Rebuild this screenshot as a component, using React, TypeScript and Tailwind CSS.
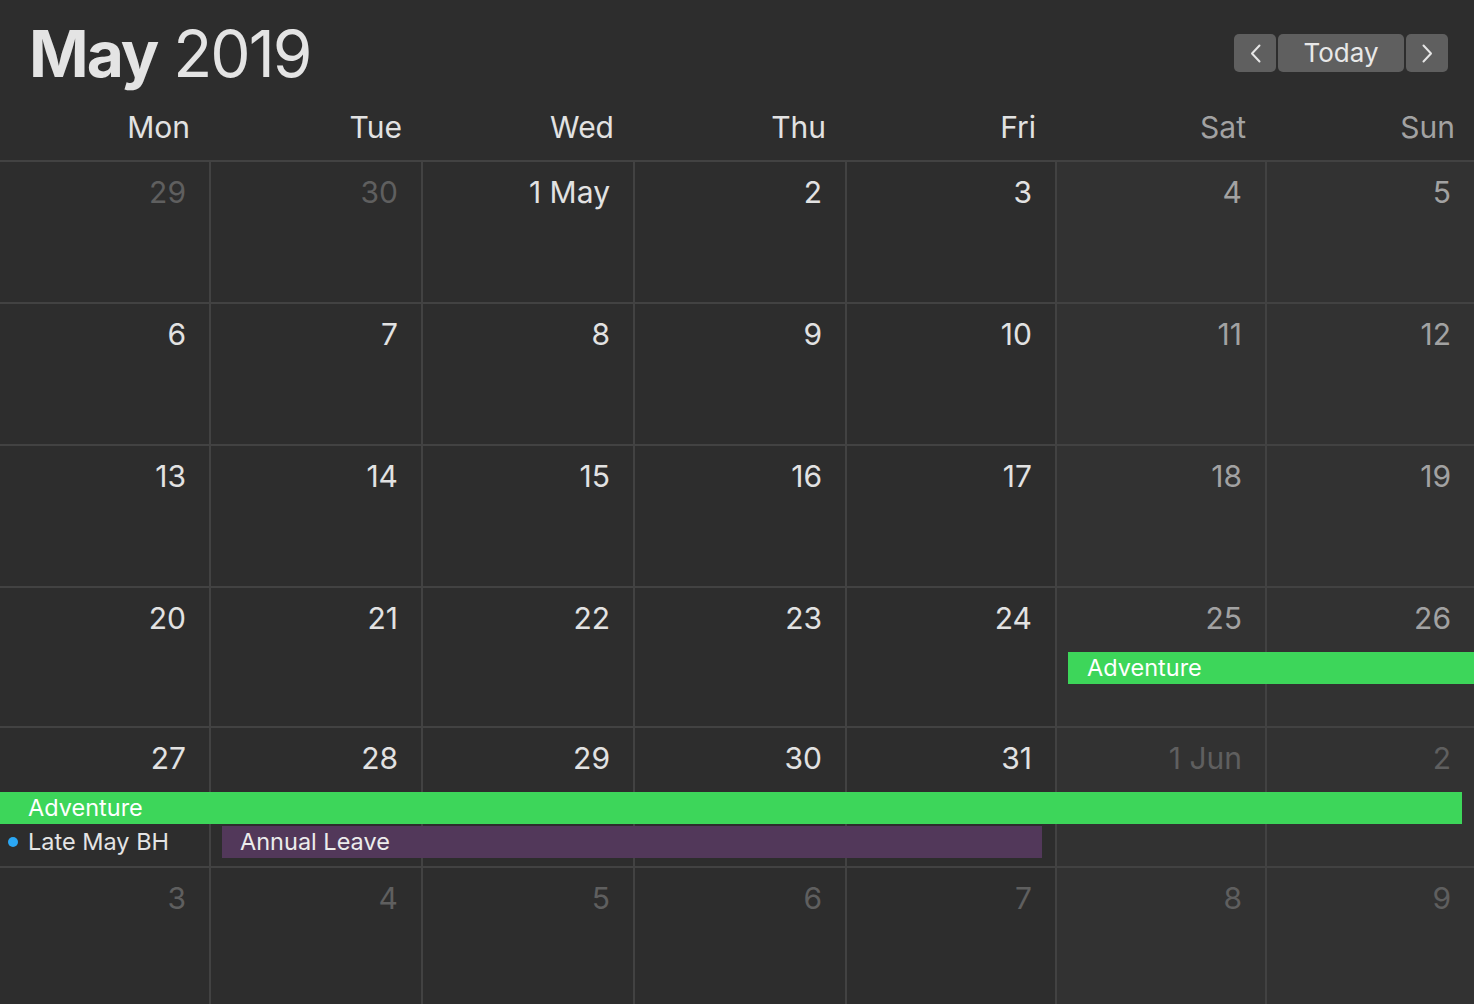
import React from 'react';

type Day = { label: string; tone: 'cur' | 'other' };

const colWidths = 'grid-cols-[209px_212px_212px_212px_210px_210px_209px]';
const dayNames = ['Mon', 'Tue', 'Wed', 'Thu', 'Fri', 'Sat', 'Sun'];

const weeks: { h: string; days: Day[] }[] = [
  {
    h: 'h-[142px]',
    days: [
      { label: '29', tone: 'other' },
      { label: '30', tone: 'other' },
      { label: '1 May', tone: 'cur' },
      { label: '2', tone: 'cur' },
      { label: '3', tone: 'cur' },
      { label: '4', tone: 'cur' },
      { label: '5', tone: 'cur' },
    ],
  },
  {
    h: 'h-[142px]',
    days: ['6', '7', '8', '9', '10', '11', '12'].map((l) => ({ label: l, tone: 'cur' as const })),
  },
  {
    h: 'h-[142px]',
    days: ['13', '14', '15', '16', '17', '18', '19'].map((l) => ({ label: l, tone: 'cur' as const })),
  },
  {
    h: 'h-[140px]',
    days: ['20', '21', '22', '23', '24', '25', '26'].map((l) => ({ label: l, tone: 'cur' as const })),
  },
  {
    h: 'h-[140px]',
    days: [
      { label: '27', tone: 'cur' },
      { label: '28', tone: 'cur' },
      { label: '29', tone: 'cur' },
      { label: '30', tone: 'cur' },
      { label: '31', tone: 'cur' },
      { label: '1 Jun', tone: 'other' },
      { label: '2', tone: 'other' },
    ],
  },
  {
    h: 'h-[138px]',
    days: ['3', '4', '5', '6', '7', '8', '9'].map((l) => ({ label: l, tone: 'other' as const })),
  },
];

function numberColor(tone: Day['tone'], weekend: boolean) {
  if (tone === 'other') return 'text-[#5f5f5f]';
  return weekend ? 'text-[#a2a2a2]' : 'text-[#e2e2e2]';
}

function Chevron({ dir }: { dir: 'left' | 'right' }) {
  return (
    <svg width="11" height="19" viewBox="0 0 11 19" fill="none">
      <path
        d={dir === 'left' ? 'M9.5 1.5 L2 9.5 L9.5 17.5' : 'M1.5 1.5 L9 9.5 L1.5 17.5'}
        stroke="#e6e6e6"
        strokeWidth="2"
        strokeLinecap="round"
        strokeLinejoin="round"
      />
    </svg>
  );
}

function WeekEvents({ index }: { index: number }) {
  if (index === 3) {
    return (
      <div className={`absolute inset-x-0 top-[64px] grid ${colWidths} grid-rows-[32px] gap-y-[2px]`}>
        <div className="col-start-6 col-span-2 ml-[13px] bg-[#3dd65a] pl-[19px] text-[23.5px] leading-[32px] text-white">
          Adventure
        </div>
      </div>
    );
  }
  if (index === 4) {
    return (
      <div className={`absolute inset-x-0 top-[64px] grid ${colWidths} grid-rows-[32px_32px] gap-y-[2px]`}>
        <div className="col-start-1 col-span-7 row-start-1 mr-[12px] bg-[#3dd65a] pl-[28px] text-[23.5px] leading-[32px] text-white">
          Adventure
        </div>
        <div className="col-start-1 row-start-2 flex items-center gap-[10px] pl-[8px] text-[23.5px] leading-[32px] text-[#e4e4e4] whitespace-nowrap">
          <span className="h-[10px] w-[10px] shrink-0 rounded-full bg-[#2ba7f4]" />
          <span>Late May BH</span>
        </div>
        <div className="col-start-2 col-span-4 row-start-2 mx-[13px] bg-[#52385a] pl-[18px] text-[23.5px] leading-[32px] text-[#ececec]">
          Annual Leave
        </div>
      </div>
    );
  }
  return null;
}

export default function App() {
  return (
    <div
      className="h-[1004px] w-[1474px] overflow-hidden bg-[#2d2d2d] text-[#e2e2e2]"
      style={{ fontFamily: 'Inter, "Open Sans", sans-serif' }}
    >
      {/* Header */}
      <div className="h-[160px] flex flex-col">
        <div className="flex items-start justify-between">
          <h1 className="mt-[22px] ml-[29px] text-[64px] leading-none tracking-[-2px] text-[#e4e4e4]">
            <span className="font-bold">May</span> <span className="font-normal">2019</span>
          </h1>
          <div className="mt-[34px] mr-[26px] flex gap-[2px]">
            <button className="flex h-[38px] w-[42px] items-center justify-center rounded-[5px] bg-[#5f5f5f]">
              <Chevron dir="left" />
            </button>
            <button className="h-[38px] w-[126px] rounded-[5px] bg-[#5f5f5f] text-[26px] leading-[38px] text-[#e8e8e8]">
              Today
            </button>
            <button className="flex h-[38px] w-[42px] items-center justify-center rounded-[5px] bg-[#5f5f5f]">
              <Chevron dir="right" />
            </button>
          </div>
        </div>
        <div className={`mt-[26px] grid ${colWidths}`}>
          {dayNames.map((d, i) => (
            <div
              key={d}
              className={`pr-[19px] text-right text-[30px] leading-none ${i >= 5 ? 'text-[#a2a2a2]' : 'text-[#e2e2e2]'}`}
            >
              {d}
            </div>
          ))}
        </div>
      </div>

      {/* Month grid */}
      <div className="flex flex-col">
        {weeks.map((w, wi) => (
          <div key={wi} className={`relative ${w.h} border-t-2 border-[#424242]`}>
            <div className={`grid h-full ${colWidths}`}>
              {w.days.map((d, di) => (
                <div
                  key={di}
                  className={`h-full pt-[15px] pr-[23px] text-right text-[30px] leading-none ${
                    di > 0 ? 'border-l-2 border-[#424242]' : ''
                  } ${di >= 5 ? 'bg-[#323232]' : ''} ${numberColor(d.tone, di >= 5)}`}
                >
                  {d.label}
                </div>
              ))}
            </div>
            <WeekEvents index={wi} />
          </div>
        ))}
      </div>
    </div>
  );
}
